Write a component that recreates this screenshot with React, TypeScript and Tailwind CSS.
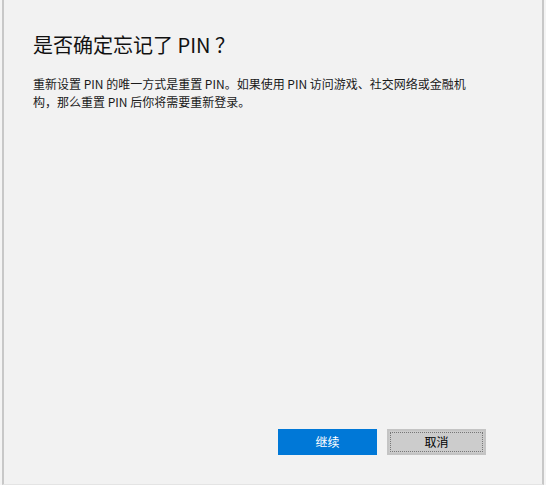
export default function App() {
  return (
    <div className="h-[485px] w-[546px] bg-[#f4f4f4] pl-[2px] pr-[2px] font-['Noto_Sans_CJK_SC',sans-serif]">
      <div className="flex h-full flex-col border-x-2 border-b border-x-[#c8c8c8] border-b-[#e4e4e4] bg-[#f2f2f2] pl-[29px]">
        <h1 className="mt-[31px] text-[20px] leading-[28px] text-[#111]">
          是否确定忘记了 PIN ？
        </h1>
        <p className="mt-[16px] w-[440px] text-[12px] leading-[18px] text-[#1a1a1a]">
          重新设置 PIN 的唯一方式是重置 PIN。如果使用 PIN 访问游戏、社交网络或金融机构，那么重置 PIN 后你将需要重新登录。
        </p>
        <div className="mt-auto mb-[29px] flex gap-[10px] pl-[245px]">
          <button className="h-[26px] w-[99px] bg-[#0078d7] text-[12px] text-white">继续</button>
          <button className="h-[26px] w-[99px] border-2 border-[#c4c4c4] bg-[#cccccc] text-[12px] text-black outline-1 outline-offset-[-4px] outline-dotted outline-[#777]">
            取消
          </button>
        </div>
      </div>
    </div>
  );
}
